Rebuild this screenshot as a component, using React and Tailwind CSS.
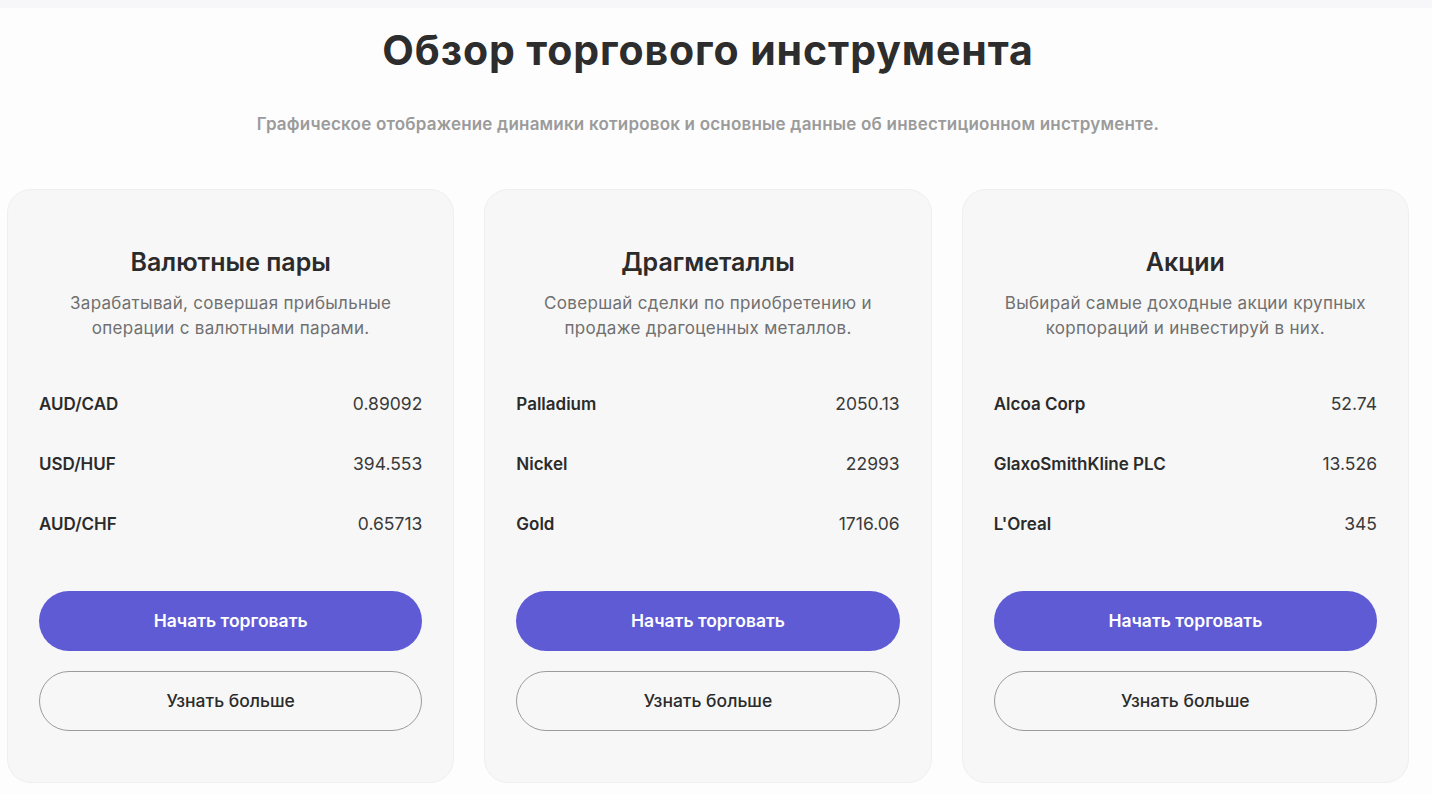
import React from 'react';

const cards = [
  {
    title: 'Валютные пары',
    text: ['Зарабатывай, совершая прибыльные', 'операции с валютными парами.'],
    rows: [
      ['AUD/CAD', '0.89092'],
      ['USD/HUF', '394.553'],
      ['AUD/CHF', '0.65713'],
    ],
  },
  {
    title: 'Драгметаллы',
    text: ['Совершай сделки по приобретению и', 'продаже драгоценных металлов.'],
    rows: [
      ['Palladium', '2050.13'],
      ['Nickel', '22993'],
      ['Gold', '1716.06'],
    ],
  },
  {
    title: 'Акции',
    text: ['Выбирай самые доходные акции крупных', 'корпораций и инвестируй в них.'],
    rows: [
      ['Alcoa Corp', '52.74'],
      ['GlaxoSmithKline PLC', '13.526'],
      ["L'Oreal", '345'],
    ],
  },
];

function Card({ card }) {
  return (
    <div className="flex flex-col rounded-[24px] border border-[#efefef] bg-[#f7f7f7] px-[31px] pt-[56px] pb-[51px]">
      <h3 className="text-center text-[25px] leading-[32px] font-semibold text-[#2b2b2b]">{card.title}</h3>
      <p className="mt-[13px] text-center text-[17px] leading-[25px] tracking-[0.3px] text-[#707070]">
        {card.text[0]}
        <br />
        {card.text[1]}
      </p>
      {/* quotes */}
      <div className="mt-[34px] flex flex-col">
        {card.rows.map(([name, value]) => (
          <div key={name} className="flex h-[60px] items-center justify-between">
            <span className="text-[17px] font-semibold text-[#2b2b2b]">{name}</span>
            <span className="-mt-[2px] text-[17.5px] text-[#3a3a3a]">{value}</span>
          </div>
        ))}
      </div>
      <button className="mt-[36px] h-[60px] w-full rounded-full bg-[#5e5bd5] text-[17.5px] font-semibold text-white">
        Начать торговать
      </button>
      <button className="mt-[20px] h-[60px] w-full rounded-full border border-[#9b9b9b] text-[17.5px] font-medium text-[#2b2b2b]">
        Узнать больше
      </button>
    </div>
  );
}

export default function App() {
  return (
    <div className="min-h-screen bg-[#fdfdfe] font-['Inter',sans-serif]">
      <div className="h-2 bg-[#f7f7f9]" />
      <div className="pl-[7px] pr-[23px]">
        <h1 className="mt-[18px] text-center text-[41px] leading-[48px] tracking-[0.9px] font-bold text-[#2d2d2d]">
          Обзор торгового инструмента
        </h1>
        <p className="mt-[38px] text-center text-[17px] leading-[24px] tracking-[0.2px] font-semibold text-[#9b9b9b]">
          Графическое отображение динамики котировок и основные данные об инвестиционном инструменте.
        </p>
        <div className="mt-[53px] grid grid-cols-3 gap-[30px]">
          {cards.map((c) => (
            <Card key={c.title} card={c} />
          ))}
        </div>
      </div>
    </div>
  );
}
